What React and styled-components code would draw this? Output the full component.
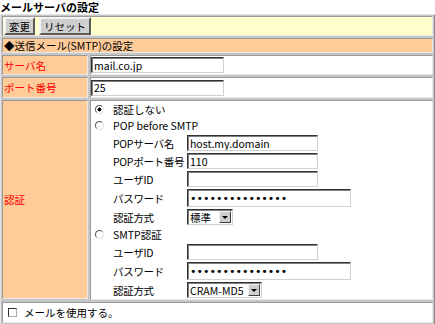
import styled, { createGlobalStyle } from "styled-components"

const GlobalStyle = createGlobalStyle`
body{
  margin: 0;
  background: #fff;
  font-family: "Noto Sans CJK JP", sans-serif;
  font-size: 10.5px;
  line-height: 13px;
  color: #000;
}
`

export default function App(){
  return(
    <>
      <GlobalStyle />
      <Title>メールサーバの設定</Title>
      <Panel>
        <WideCell $bg="#ffffcc" $h={20}>
          <Button type="button">変更</Button>
          <Button type="reset">リセット</Button>
        </WideCell>
        <WideCell $bg="#ffcc99" $h={15}>◆送信メール(SMTP)の設定</WideCell>

        <LabelCell $h={20}>サーバ名</LabelCell>
        <ValueCell>
          <TextInput $w={133} defaultValue="mail.co.jp" />
        </ValueCell>

        <LabelCell $h={21}>ポート番号</LabelCell>
        <ValueCell>
          <TextInput $w={133} defaultValue="25" />
        </ValueCell>

        <LabelCell $h={199}>認証</LabelCell>
        <AuthCell>
          <RadioLine $h={16}>
            <Radio name="auth" defaultChecked />
            認証しない
          </RadioLine>
          <RadioLine $h={17}>
            <Radio name="auth" />
            POP before SMTP
          </RadioLine>
          <FieldLine $h={18}>
            <FieldLabel>POPサーバ名</FieldLabel>
            <TextInput $w={131} defaultValue="host.my.domain" />
          </FieldLine>
          <FieldLine $h={18}>
            <FieldLabel>POPポート番号</FieldLabel>
            <TextInput $w={131} defaultValue="110" />
          </FieldLine>
          <FieldLine $h={18}>
            <FieldLabel>ユーザID</FieldLabel>
            <TextInput $w={131} />
          </FieldLine>
          <FieldLine $h={20}>
            <FieldLabel>パスワード</FieldLabel>
            <PasswordInput defaultValue="passwordpasswor" />
          </FieldLine>
          <FieldLine $h={18}>
            <FieldLabel>認証方式</FieldLabel>
            <SelectBox $w={46}>
              <NativeSelect defaultValue="std">
                <option value="std">標準</option>
              </NativeSelect>
              <ArrowButton />
            </SelectBox>
          </FieldLine>

          <RadioLine $h={17}>
            <Radio name="auth" />
            SMTP認証
          </RadioLine>
          <FieldLine $h={18}>
            <FieldLabel>ユーザID</FieldLabel>
            <TextInput $w={131} />
          </FieldLine>
          <FieldLine $h={20}>
            <FieldLabel>パスワード</FieldLabel>
            <PasswordInput defaultValue="passwordpasswor" />
          </FieldLine>
          <FieldLine $h={18}>
            <FieldLabel>認証方式</FieldLabel>
            <SelectBox $w={75}>
              <NativeSelect defaultValue="cram">
                <option value="cram">CRAM-MD5</option>
              </NativeSelect>
              <ArrowButton />
            </SelectBox>
          </FieldLine>
        </AuthCell>

        <WideCell $bg="#fff" $h={21}>
          <CheckLabel>
            <Check type="checkbox" />
            メールを使用する。
          </CheckLabel>
        </WideCell>
      </Panel>
    </>
  )
}

const Title = styled.h1`
margin: 0;
padding-top: 1px;
font-size: 11px;
line-height: 13px;
font-weight: bold;
white-space: nowrap;
`

const Panel = styled.form`
width: 435px;
box-sizing: border-box;
display: grid;
grid-template-columns: 86px 1fr;
gap: 2px;
padding: 1px;
background: #c6c6c6;
border: 1px solid;
border-color: #e4e4e4 #8a8a8a #8a8a8a #e4e4e4;
`

const Cell = styled.div`
box-sizing: border-box;
border: 1px solid;
border-color: #9a9a9a #e8e8e8 #e8e8e8 #9a9a9a;
display: flex;
align-items: center;
`

const WideCell = styled(Cell)`
grid-column: 1 / -1;
height: ${p => p.$h}px;
background: ${p => p.$bg};
padding: 0 1px;
gap: 4px;
`

const LabelCell = styled(Cell)`
height: ${p => p.$h}px;
background: #ffcc99;
color: #ff0000;
padding: 0 1px;
`

const ValueCell = styled(Cell)`
background: #fff;
padding: 0;
`

const AuthCell = styled.div`
box-sizing: border-box;
border: 1px solid;
border-color: #9a9a9a #e8e8e8 #e8e8e8 #9a9a9a;
background: #fff;
display: flex;
flex-direction: column;
`

const RadioLine = styled.label`
height: ${p => p.$h}px;
display: flex;
align-items: center;
gap: 9px;
padding-left: 4px;
`

const FieldLine = styled.div`
height: ${p => p.$h}px;
display: flex;
align-items: center;
padding-left: 22px;
`

const FieldLabel = styled.span`
width: 74px;
flex: none;
white-space: nowrap;
letter-spacing: -0.3px;
`

const Button = styled.button`
height: 18px;
padding: 0 3px;
margin: 0;
font: inherit;
line-height: 13px;
background: #cfcfcf;
color: #000;
border: 2px solid;
border-color: #f4f4f4 #5a5a5a #5a5a5a #f4f4f4;
`

const TextInput = styled.input`
box-sizing: border-box;
width: ${p => p.$w}px;
height: 16px;
margin: 0;
padding: 0 2px;
font: inherit;
line-height: 12px;
background: #fff;
border: 1px solid;
border-color: #333 #d0d0d0 #d0d0d0 #333;
box-shadow: inset 1px 1px 0 #808080;
outline: none;
`

const PasswordInput = styled(TextInput).attrs({ type: "password" })`
width: 164px;
height: 18px;
font-family: "DejaVu Sans", sans-serif;
font-size: 11px;
`

const SelectBox = styled.span`
box-sizing: border-box;
width: ${p => p.$w}px;
height: 16px;
display: flex;
align-items: center;
background: #fff;
border: 1px solid;
border-color: #333 #d0d0d0 #d0d0d0 #333;
box-shadow: inset 1px 1px 0 #808080;
`

const NativeSelect = styled.select`
appearance: none;
flex: 1;
min-width: 0;
height: 14px;
margin: 0;
padding: 0 2px;
border: 0;
background: transparent;
font: inherit;
line-height: 13px;
color: #000;
outline: none;
`

const ArrowButton = styled.span`
box-sizing: border-box;
width: 12px;
height: 12px;
margin-right: 1px;
flex: none;
display: flex;
align-items: center;
justify-content: center;
background: #cfcfcf;
border: 1px solid;
border-color: #f4f4f4 #404040 #404040 #f4f4f4;

&::after{
  content: "";
  border-left: 3px solid transparent;
  border-right: 3px solid transparent;
  border-top: 3px solid #000;
}
`

const Radio = styled.input.attrs({ type: "radio" })`
appearance: none;
box-sizing: border-box;
width: 9px;
height: 9px;
margin: 0;
flex: none;
border-radius: 50%;
border: 1px solid;
border-color: #555 #e0e0e0 #e0e0e0 #555;
background: #fff;

&:checked{
  background: radial-gradient(circle, #000 0 1.8px, #fff 2.2px);
}
`

const CheckLabel = styled.label`
display: flex;
align-items: center;
gap: 7px;
padding-left: 4px;
`

const Check = styled.input`
appearance: none;
box-sizing: border-box;
width: 9px;
height: 9px;
margin: 0;
border: 1px solid;
border-color: #333 #aaa #aaa #333;
background: #fff;
`
